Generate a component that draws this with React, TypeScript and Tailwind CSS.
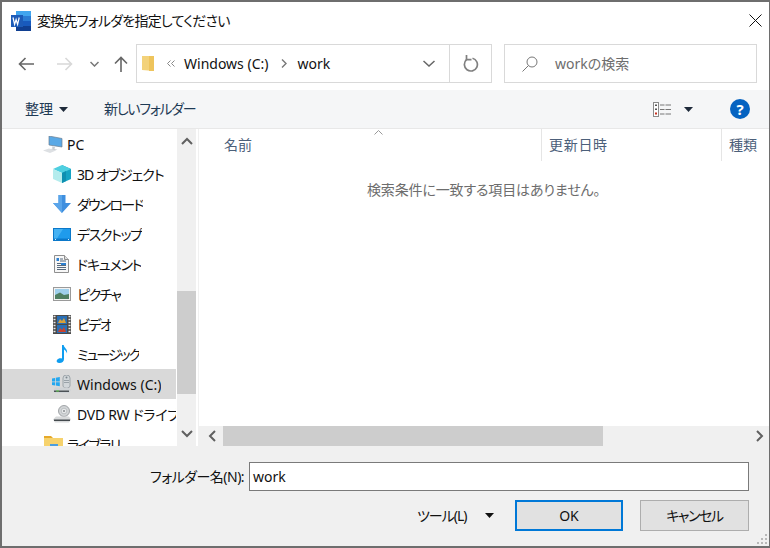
import React from "react";

const Chev = ({ d, cls = "" }: { d: string; cls?: string }) => (
  <svg width="12" height="12" viewBox="0 0 12 12" className={cls} fill="none" stroke="#606060" strokeWidth="2">
    <path d={d} />
  </svg>
);

const Tri = ({ color = "#1e2a3a" }: { color?: string }) => (
  <svg width="9" height="5" viewBox="0 0 9 5" className="block"><path d="M0 0h9L4.500 5z" fill={color} /></svg>
);

const PcIcon = () => (
  <svg width="20" height="17" viewBox="0 0 20 17">
    <path d="M6 0l13 2.500v8.500L6 9z" fill="#5aa9e6" stroke="#6f7f90" strokeWidth=".7" />
    <path d="M9 10.500l3 .5-.5 2 3 .7-4 1-3-1.500 2-.7z" fill="#c9ced2" />
    <path d="M0 14.500l6-2 7 2-6 2.500z" fill="#dde0e3" />
  </svg>
);
const CubeIcon = () => (
  <svg width="18" height="18" viewBox="0 0 18 18">
    <path d="M9 0l9 4v10l-9 4z" fill="#16a3c3" />
    <path d="M9 0L0 4l9 4 9-4z" fill="#4fcfe0" />
    <path d="M0 4v10l9 4V8z" fill="#b4eced" />
    <path d="M9 8v10l4-2V6z" fill="#0e8fb0" />
  </svg>
);
const DownIcon = () => (
  <svg width="18" height="18" viewBox="0 0 18 18">
    <path d="M5.500 0h7v8H18l-9 10L0 8h5.500z" fill="#3f8fdf" />
    <path d="M5.500 0h3.500v18L0 8h5.500z" fill="#5aa5ea" />
  </svg>
);
const DesktopIcon = () => (
  <svg width="18" height="13" viewBox="0 0 18 13">
    <rect width="18" height="13" fill="#0b78c9" />
    <path d="M1 1h16v9.500H1z" fill="#1f9bec" />
    <path d="M1 1h9L4 10.500H1z" fill="#45b2f3" />
    <path d="M2 11.500h1M15 11.500h1" stroke="#d8effc" />
  </svg>
);
const DocIcon = () => (
  <svg width="15" height="18" viewBox="0 0 15 18">
    <path d="M.5.500h10l4 4v13H.5z" fill="#f7f7f7" stroke="#8f8f8f" />
    <path d="M10.500.500v4h4" fill="#ddd" stroke="#8f8f8f" />
    <path d="M6 4h3M6 6h6M3 8.500h9M3 10.500h9M3 12.500h9M3 14.500h9" stroke="#56697d" />
    <rect x="2.500" y="3" width="2.500" height="3" fill="#2b7fd0" />
    <rect x="7" y="8" width="5" height="2" fill="#2b7fd0" />
  </svg>
);
const PicIcon = () => (
  <svg width="18" height="14" viewBox="0 0 18 14">
    <rect x=".5" y=".5" width="17" height="13" fill="#f2f2f2" stroke="#9a9a9a" />
    <rect x="2" y="2" width="14" height="6" fill="#9fd0ec" />
    <path d="M2 8l5-2.500 4 2.500 5-1v5H2z" fill="#4f7f62" />
  </svg>
);
const VideoIcon = () => (
  <svg width="18" height="19" viewBox="0 0 18 19">
    <rect width="18" height="19" fill="#4a4a4a" />
    <path d="M.5 1.500h2M.5 4.500h2M.5 7.500h2M.5 10.500h2M.5 13.500h2M.5 16.500h2M15.500 1.500h2M15.500 4.500h2M15.500 7.500h2M15.500 10.500h2M15.500 13.500h2M15.500 16.500h2" stroke="#e8e8e8" strokeWidth="1.400" />
    <rect x="4" y="1" width="10" height="8" fill="#2a6fb5" />
    <rect x="4" y="10" width="10" height="8" fill="#2a6fb5" />
    <path d="M5 8l2-4 2 2 2-3 2 5z" fill="#d8a13a" />
    <path d="M5 17l2-4 2 2 2-3 2 5z" fill="#c9432e" />
  </svg>
);
const MusicIcon = () => (
  <svg width="12" height="18" viewBox="0 0 12 18">
    <path d="M6 0h1.700c.3 3 4.300 4 3.300 8.500-.5-2-2-3.500-3-4V14c0 2.500-2 4-4.500 4S0 16.500 1 15s3-2 5-1.500z" fill="#0f9df0" />
  </svg>
);
const DriveIcon = () => (
  <svg width="20" height="19" viewBox="0 0 20 19">
    <path d="M0 3.500l3-.5v3.500H0zM3.800 2.800l4-.8v4.500h-4zM0 7.200h3v3.300l-3-.5zM3.800 7.200h4v4l-4-.6z" fill="#22a7f0" />
    <path d="M11 3a3.500 3 0 0 1 7 0v8a3.500 2 0 0 1-7 0z" fill="#d2d7da" stroke="#8e979d" strokeWidth=".8" />
    <path d="M12 5.500h5M12 7.500h5" stroke="#9aa3a9" />
    <circle cx="14.500" cy="2.500" r="1" fill="#7d878e" />
    <path d="M3 12.500h13l3 2.500-2 3H3l-2-2z" fill="#cfd3d6" />
    <path d="M2 15.500h15v1.500H2z" fill="#4c5256" />
    <path d="M4 16h3" stroke="#63d04f" />
  </svg>
);
const DvdIcon = () => (
  <svg width="20" height="18" viewBox="0 0 20 18">
    <circle cx="12" cy="6" r="5.500" fill="#d2d5d7" stroke="#8e9295" strokeWidth=".8" />
    <circle cx="12" cy="6" r="2.800" fill="#e9ebec" stroke="#a5a9ac" strokeWidth=".6" />
    <circle cx="12" cy="6" r="1.100" fill="#8e9295" />
    <path d="M4 11.500h13l2 3-2 3H3l-2-3z" fill="#d8dadb" />
    <path d="M2 14.500h16v1.500H2z" fill="#444a4e" />
  </svg>
);
const LibIcon = () => (
  <svg width="19" height="16" viewBox="0 0 19 16">
    <path d="M0 0h7l2 2h-9z" fill="#e6a92a" />
    <rect y="2" width="19" height="14" fill="#f6d26d" />
    <rect x="6" y="8" width="8" height="8" fill="#4a9ee0" />
  </svg>
);

const Item = ({
  icon,
  label,
  active,
  indent = "pl-[46px]",
  gap = "w-[27px]",
  track = "",
}: {
  icon: React.ReactNode;
  label: string;
  active?: boolean;
  indent?: string;
  gap?: string;
  track?: string;
}) => (
  <div className={`flex h-[30px] shrink-0 items-center ${indent} ${active ? "bg-[#d9d9d9]" : ""}`}>
    <span className={`flex ${gap} shrink-0 justify-center`}>{icon}</span>
    <span className={`ml-[2px] overflow-hidden whitespace-nowrap pt-[1px] text-[14px] leading-[18px] text-[#111] ${track}`}>{label}</span>
  </div>
);

export default function App() {
  return (
    <div
      className="flex h-[548px] w-[770px] flex-col overflow-hidden border-t-2 border-r border-b-2 border-l-2 border-[#6e6e6e] bg-white text-[14px] text-[#111] [font-feature-settings:'palt']"
      style={{ fontFamily: '"Noto Sans", "Noto Sans CJK JP", sans-serif' }}
    >
      {/* title */}
      <div className="flex h-[37px] shrink-0 items-center pl-[9px]">
        <svg width="20" height="20" viewBox="0 0 20 20">
          <rect x="5" y="0" width="15" height="20" fill="#2b7cd3" />
          <rect x="5" y="0" width="15" height="5" fill="#41a5ee" />
          <rect x="5" y="10" width="15" height="5" fill="#185abd" />
          <rect x="5" y="15" width="15" height="5" fill="#103f91" />
          <rect x="0" y="4" width="12" height="12" fill="#1c5bb8" />
          <path d="M2 6.500l1.600 7 1.500-5 1.500 5 1.600-7" fill="none" stroke="#fff" strokeWidth="1.200" />
        </svg>
        <span className="ml-[6px] leading-[20px] tracking-[-0.75px]">変換先フォルダを指定してください</span>
        <svg className="ml-auto mr-[7px]" width="13" height="13" viewBox="0 0 13 13" stroke="#111" strokeWidth="1" fill="none">
          <path d="M.5.500l12 12M12.500.500l-12 12" />
        </svg>
      </div>

      {/* nav */}
      <div className="mt-[5px] flex h-[39px] shrink-0 items-center">
        <div className="flex w-[134px] shrink-0 items-center">
          <svg className="ml-[16px]" width="16" height="14" viewBox="0 0 16 14" fill="none" stroke="#666" strokeWidth="1.600">
            <path d="M16 7H1.500M7.500 1L1.500 7l6 6" />
          </svg>
          <svg className="ml-[23px]" width="16" height="14" viewBox="0 0 16 14" fill="none" stroke="#d8d8d8" strokeWidth="1.600">
            <path d="M0 7h14.500M8.500 1l6 6-6 6" />
          </svg>
          <svg className="ml-[17px]" width="9" height="6" viewBox="0 0 9 6" fill="none" stroke="#777" strokeWidth="1.500">
            <path d="M.5 1l4 4 4-4" />
          </svg>
          <svg className="ml-[15px]" width="14" height="16" viewBox="0 0 14 16" fill="none" stroke="#666" strokeWidth="1.600">
            <path d="M7 16V1.500M1 7.500l6-6 6 6" />
          </svg>
        </div>
        <div className="flex h-[39px] w-[356px] shrink-0 items-center border border-[#d9d9d9]">
          <svg className="ml-[5px]" width="13" height="16" viewBox="0 0 13 16">
            <path d="M0 0h7l5 5v10l-12-1z" fill="#f3d27a" />
            <path d="M7 0h5v15H7z" fill="#eec45c" />
          </svg>
          <svg className="ml-[12px]" width="8" height="7" viewBox="0 0 8 7" fill="none" stroke="#888" strokeWidth="1">
            <path d="M3.500.500L.5 3.500l3 3M7.500.500l-3 3 3 3" />
          </svg>
          <span className="ml-[9px] whitespace-nowrap leading-[18px]">Windows (C:)</span>
          <svg className="ml-[13px]" width="6" height="9" viewBox="0 0 6 9" fill="none" stroke="#777" strokeWidth="1.400">
            <path d="M1 .5l4 4-4 4" />
          </svg>
          <span className="ml-[10px] leading-[18px]">work</span>
          <svg className="ml-auto mr-[14px]" width="12" height="7" viewBox="0 0 12 7" fill="none" stroke="#666" strokeWidth="1.500">
            <path d="M.5 1l5.500 5 5.500-5" />
          </svg>
          <div className="flex h-full w-[42px] items-center justify-center border-l border-[#d9d9d9]">
            <svg width="16" height="17" viewBox="0 0 16 17" fill="none" stroke="#808080" strokeWidth="1.700">
              <path d="M9.500 3.200a6.500 6.500 0 1 1-6 1.500" />
              <path d="M3.500 0v4.700H8.500" />
            </svg>
          </div>
        </div>
        <div className="ml-[12px] flex h-[39px] w-[253px] shrink-0 items-center border border-[#d9d9d9]">
          <svg className="ml-[17px]" width="16" height="16" viewBox="0 0 16 16" fill="none" stroke="#777" strokeWidth="1">
            <circle cx="10" cy="6" r="5" />
            <path d="M6.500 9.500L.5 15.500" />
          </svg>
          <span className="ml-[17px] leading-[18px] text-[#6d6d6d]">workの検索</span>
        </div>
      </div>

      {/* toolbar */}
      <div className="mt-[7px] flex h-[39px] shrink-0 items-center border-b border-[#e8e8e8] bg-[#f5f6f7]">
        <span className="ml-[23px] leading-[18px] text-[#1e3a55]">整理</span>
        <span className="ml-[6px]"><Tri /></span>
        <span className="ml-[36px] leading-[18px] tracking-[-1.25px] text-[#1e3a55]">新しいフォルダー</span>
        <svg className="ml-auto" width="18" height="15" viewBox="0 0 18 15">
          <rect x=".5" y=".5" width="5" height="14" fill="#fff" stroke="#8a8a8a" />
          <path d="M2 2.500h2V4H2zM2 6.500h2V8H2z" fill="#555" /><path d="M2 10.500h2v2H2z" fill="#c8311f" />
          <path d="M7 3h4.500M12.500 3H18M7 7.500h4.500M12.500 7.500H18M7 12h4.500M12.500 12H18" stroke="#767676" />
        </svg>
        <span className="ml-[13px]"><Tri /></span>
        <span className="ml-[37px] mr-[19px] flex h-[20px] w-[20px] items-center justify-center rounded-full bg-[#0563c1] text-[15px] font-bold leading-none text-white">?</span>
      </div>

      {/* main */}
      <div className="flex min-h-0 flex-1">
        {/* sidebar */}
        <div className="flex w-[175px] shrink-0 flex-col overflow-hidden pr-[1px]">
          <Item icon={<PcIcon />} label="PC" indent="pl-[39px]" gap="w-[24px]" />
          <Item icon={<CubeIcon />} label="3D オブジェクト" track="tracking-[-1px]" />
          <Item icon={<DownIcon />} label="ダウンロード" track="tracking-[-1.8px]" />
          <Item icon={<DesktopIcon />} label="デスクトップ" track="tracking-[-1.4px]" />
          <Item icon={<DocIcon />} label="ドキュメント" track="tracking-[-1.2px]" />
          <Item icon={<PicIcon />} label="ピクチャ" track="tracking-[-1.5px]" />
          <Item icon={<VideoIcon />} label="ビデオ" track="tracking-[-1.5px]" />
          <Item icon={<MusicIcon />} label="ミュージック" track="tracking-[-2px]" />
          <Item icon={<DriveIcon />} label="Windows (C:)" active />
          <Item icon={<DvdIcon />} label="DVD RW ドライブ (D:)" track="tracking-[-0.3px]" />
          <Item icon={<LibIcon />} label="ライブラリ" indent="pl-[39px]" gap="w-[24px]" track="tracking-[-1.5px]" />
        </div>
        {/* sidebar scrollbar */}
        <div className="flex w-[19px] shrink-0 flex-col bg-[#f0f0f0]">
          <div className="flex h-[25px] shrink-0 items-center justify-center"><Chev d="M1 8l5-5 5 5" /></div>
          <div className="h-[137px] shrink-0" />
          <div className="h-[103px] shrink-0 bg-[#cdcdcd]" />
          <div className="flex-1" />
          <div className="flex h-[27px] shrink-0 items-center justify-center"><Chev d="M1 4l5 5 5-5" /></div>
        </div>
        <div className="w-[3px] shrink-0 border-r border-[#f0f0f0]" />
        {/* files */}
        <div className="flex min-w-0 flex-1 flex-col">
          <div className="relative flex h-[32px] shrink-0 text-[#4c607a]">
            <svg className="absolute left-[175px] top-[1px]" width="9" height="5" viewBox="0 0 9 5" fill="none" stroke="#999"><path d="M.5 4.500l4-4 4 4" /></svg>
            <div className="flex w-[343px] shrink-0 items-center border-r border-[#e5e5e5] pl-[25px] leading-[18px]">名前</div>
            <div className="flex w-[180px] shrink-0 items-center border-r border-[#e5e5e5] pl-[7px] leading-[18px] tracking-[0.7px]">更新日時</div>
            <div className="flex flex-1 items-center pl-[7px] leading-[18px]">種類</div>
          </div>
          <div className="flex-1 pl-[168px] pt-[20px] leading-[18px] tracking-[-0.15px] text-[#6d6d6d]">検索条件に一致する項目はありません。</div>
          <div className="flex h-[20px] shrink-0 bg-[#f0f0f0] pl-[3px]">
            <div className="flex w-[21px] shrink-0 items-center justify-center"><Chev d="M8 1L3 6l5 5" /></div>
            <div className="w-[380px] shrink-0 bg-[#cdcdcd]" />
            <div className="ml-auto flex w-[21px] items-center justify-center"><Chev d="M4 1l5 5-5 5" /></div>
          </div>
        </div>
      </div>

      {/* footer */}
      <div className="relative flex h-[100px] shrink-0 flex-col bg-[#f0f0f0]">
        <div className="mt-[16px] flex h-[29px] items-center">
          <span className="ml-[148px] w-[94px] whitespace-nowrap leading-[18px] tracking-[-0.5px]">フォルダー名(N):</span>
          <div className="ml-[5px] flex h-[29px] w-[500px] items-center border border-[#7a7a7a] bg-white pl-[3px] leading-[18px]">work</div>
        </div>
        <div className="mt-[9px] flex items-center">
          <span className="ml-[415px] w-[50px] whitespace-nowrap leading-[18px] tracking-[-1px]">ツール(L)</span>
          <span className="ml-[18px]"><Tri color="#111" /></span>
          <div className="ml-[21px] flex h-[31px] w-[108px] items-center justify-center border-2 border-[#0078d7] bg-[#e1e1e1] leading-[18px]">OK</div>
          <div className="ml-[17px] flex h-[31px] w-[109px] items-center justify-center border border-[#adadad] bg-[#e1e1e1] leading-[18px] tracking-[-1.4px]">キャンセル</div>
        </div>
        <svg className="absolute bottom-[1px] right-[1px]" width="11" height="11" viewBox="0 0 11 11" fill="#b8b8b8">
          <rect x="8" y="0" width="2" height="2" /><rect x="4" y="4" width="2" height="2" /><rect x="8" y="4" width="2" height="2" />
          <rect x="0" y="8" width="2" height="2" /><rect x="4" y="8" width="2" height="2" /><rect x="8" y="8" width="2" height="2" />
        </svg>
      </div>
    </div>
  );
}
